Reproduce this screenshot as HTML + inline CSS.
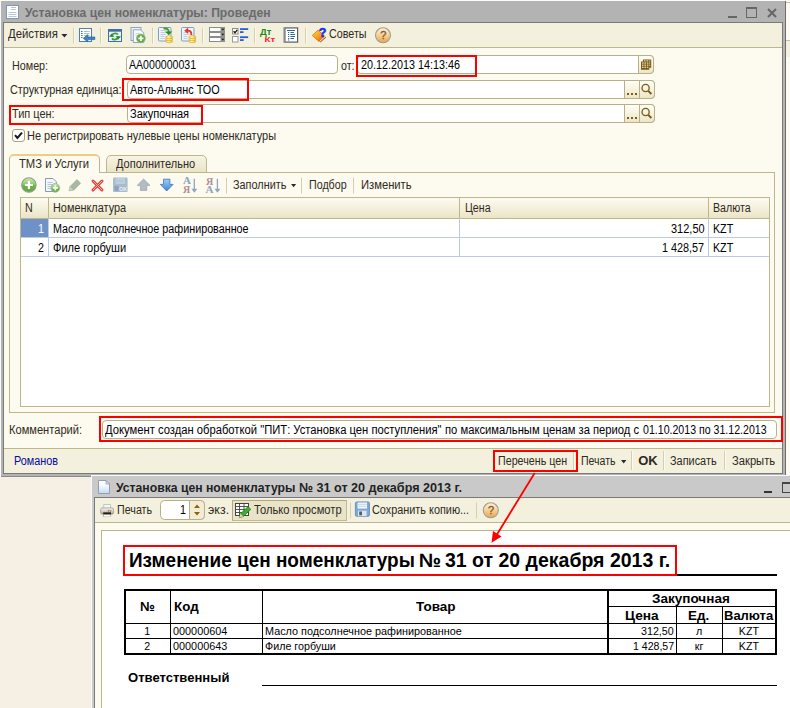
<!DOCTYPE html>
<html>
<head>
<meta charset="utf-8">
<style>
*{box-sizing:border-box;margin:0;padding:0}
html,body{width:790px;height:708px;overflow:hidden;background:#fff}
body{font-family:"Liberation Sans",sans-serif;font-size:11px;color:#2b2b2b;position:relative}
.a{position:absolute}
.t{position:absolute;white-space:nowrap;line-height:1;transform-origin:0 0}
.d{position:absolute;white-space:nowrap;line-height:1;color:#000}
.inp{position:absolute;background:#fff;border:1px solid #b9b08a;border-radius:4px;height:19px}
.ib{position:absolute;background:linear-gradient(#fffef6,#ece6c8);border:1px solid #b9b08a;height:19px}
.sep{position:absolute;width:1px;background:#d6cfae;box-shadow:1px 0 0 #fcfaee}
.red{position:absolute;border:2px solid #fc0000}
svg{position:absolute;overflow:visible}
</style>
</head>
<body>
<!-- backdrop -->
<div class="a" style="left:0;top:0;width:790px;height:708px;background:#f6f0e4"></div>
<div class="a" style="left:786px;top:0;width:4px;height:476px;background:#fdfaef"></div>
<div class="a" style="left:786px;top:2px;width:4px;height:1px;background:#c9bf94"></div>
<div class="a" style="left:786px;top:41px;width:4px;height:16px;background:#f3f1de"></div>
<div class="a" style="left:786px;top:40px;width:4px;height:1px;background:#c9bf94"></div>
<div class="a" style="left:0;top:0;width:790px;height:1px;background:#fafafa"></div>
<div class="a" style="left:0;top:0;width:1px;height:477px;background:#fafafa"></div>

<!-- WINDOW 1 frame -->
<div class="a" style="left:1px;top:1px;width:785px;height:476px;background:#b3b3b3;border-right:1px solid #6e6e6e;border-bottom:1px solid #8a8a8a"></div>
<div class="a" style="left:3px;top:22px;width:780px;height:452px;background:#7a7a7a"></div>
<div class="a" style="left:4px;top:23px;width:778px;height:450px;background:#fdfaef"></div>
<!-- toolbar 1 -->
<div class="a" style="left:4px;top:23px;width:778px;height:25px;background:#f3f1de;border-bottom:1px solid #bfb78c"></div>
<!-- bottom bar -->
<div class="a" style="left:4px;top:448px;width:778px;height:25px;background:#f3f1de;border-top:1px solid #bfb78c"></div>

<!-- title icon 1 -->
<svg style="left:6px;top:5px" width="13" height="14" viewBox="0 0 13 14"><rect x="0.5" y="0.5" width="12" height="13" fill="#fff" stroke="#7f97b3"/><path d="M5 2.5h5M5 4.5h5M2.5 7.5h8M2.5 9.5h8M2.5 11.5h8" stroke="#b7c6d8" stroke-width="1"/></svg>
<!-- window 1 controls -->
<div class="a" style="left:728px;top:16px;width:9px;height:2px;background:#666"></div>
<div class="a" style="left:746px;top:7px;width:11px;height:11px;border:1px solid #666;border-top-width:2px"></div>
<svg style="left:767px;top:8px" width="10" height="10" viewBox="0 0 10 10"><path d="M1 1L9 9M9 1L1 9" stroke="#666" stroke-width="2"/></svg>

<!--ICONS1S-->
<!-- toolbar1 icons -->
<svg style="left:0;top:0" width="400" height="50" viewBox="0 0 400 50">
<path d="M61.4 34h6l-3 3.4z" fill="#2b2b2b"/>
<g stroke="#d6cfae"><path d="M73.5 27.5v16M100.5 27.5v16M152.5 27.5v16M202.5 27.5v16M254.5 27.5v16M305.5 27.5v16"/></g>
<g stroke="#fcfaee"><path d="M74.5 27.5v16M101.5 27.5v16M153.5 27.5v16M203.5 27.5v16M255.5 27.5v16M306.5 27.5v16"/></g>
<defs><linearGradient id="cg" x1="0" y1="0" x2="1" y2="0"><stop offset="0" stop-color="#f6cf44"/><stop offset=".4" stop-color="#fff3a8"/><stop offset="1" stop-color="#f2c434"/></linearGradient></defs>
<!-- icon1 -->
<g transform="translate(79,28)">
<rect x="0.5" y="0.5" width="12" height="13" fill="#fdfeff" stroke="#4f7eab"/>
<path d="M2 3.5h1.6M2 5.5h1.6M2 7.5h1.6M2 9.5h1.6" stroke="#3a78c0"/>
<path d="M5 3.5h5.5M5 5.5h5.5M5 7.5h5.5" stroke="#b3bcc6"/>
<path d="M4.3 10.3L8.8 6.7V9H15.8V11.6H8.8V13.9z" fill="#3b83c6" stroke="#2c6096" stroke-width=".7"/>
</g>
<!-- icon2 -->
<g transform="translate(108,29)">
<rect x="0.5" y="0.5" width="13" height="12" fill="#e9f0f7" stroke="#3f6fa3"/>
<rect x="0.5" y="0.5" width="13" height="2.2" fill="#3f6fa3"/>
<path d="M3.6 7.6C3.8 4.2 8.4 3.4 10 5.6" stroke="#3e9b2c" stroke-width="1.7" fill="none"/>
<path d="M10.4 7.4C10.2 10.8 5.6 11.4 4 9.4" stroke="#3e9b2c" stroke-width="1.7" fill="none"/>
<path d="M1 7.8h5.4l-2.7-3.4z" fill="#2f8a22"/>
<path d="M7.6 7.2h5.4l-2.7 3.4z" fill="#2f8a22"/>
</g>
<!-- icon3 -->
<g transform="translate(130.5,27)">
<rect x="0.5" y="0.5" width="10" height="13" fill="#eef3f8" stroke="#8aa4bf"/>
<path d="M2.8 2.8h7.2l3.3 3.3v9.4h-10.5z" fill="#f8fafd" stroke="#8aa4bf"/>
<path d="M5 6.5h4M5 8.5h3" stroke="#c3cfdc"/>
<circle cx="10.4" cy="11.4" r="4.4" fill="#58ad3c" stroke="#9fb59a" stroke-width=".8"/>
<path d="M10.4 8.8v5.2M7.8 11.4h5.2" stroke="#fff" stroke-width="1.7"/>
</g>
<!-- icon4 -->
<g transform="translate(158,27)">
<rect x="0.5" y="0.5" width="12.5" height="13.5" rx="1" fill="#f0f5fa" stroke="#7d9fc4"/>
<path d="M2.5 3.5h6M2.5 5.5h6M2.5 7.5h5M2.5 9.5h4M2.5 11.5h4" stroke="#bccde0"/>
<path d="M5.5 1.6C9.5 1 10.8 2.6 10.7 5" stroke="#3e9b2c" stroke-width="1.9" fill="none"/>
<path d="M7.1 4.6h7.2l-3.6 3.6z" fill="#2f8a22"/>
<g fill="url(#cg)" stroke="#d2a428" stroke-width=".6"><ellipse cx="11.1" cy="14.2" rx="3.6" ry="1.5"/><ellipse cx="11.1" cy="12.2" rx="3.6" ry="1.5"/><ellipse cx="11.1" cy="10.2" rx="3.6" ry="1.5"/></g>
</g>
<!-- icon5 -->
<g transform="translate(181,27)">
<rect x="0.5" y="0.5" width="12.5" height="13.5" rx="1" fill="#f0f5fa" stroke="#7d9fc4"/>
<path d="M2.5 5.5h5M2.5 7.5h5M2.5 9.5h4M2.5 11.5h4" stroke="#bccde0"/>
<path d="M10.3 8.2C10.8 4.6 9 3.4 6 3.6" stroke="#e23a2e" stroke-width="1.9" fill="none"/>
<path d="M7.2 0.6v6.4l-4-3.2z" fill="#e23a2e"/>
<g fill="url(#cg)" stroke="#d2a428" stroke-width=".6"><ellipse cx="11.3" cy="14.2" rx="3.6" ry="1.5"/><ellipse cx="11.3" cy="12.2" rx="3.6" ry="1.5"/><ellipse cx="11.3" cy="10.2" rx="3.6" ry="1.5"/></g>
</g>
<!-- icon6 -->
<g transform="translate(209,27)" stroke="#8c8c8c" fill="#fff">
<rect x="0.5" y="0.5" width="15" height="4"/><rect x="0.5" y="5.5" width="15" height="4"/><rect x="0.5" y="10.5" width="15" height="4"/>
<g fill="#909090" stroke="none"><rect x="11.5" y="0" width="4.5" height="5"/><rect x="11.5" y="5" width="4.5" height="5"/><rect x="11.5" y="10" width="4.5" height="5"/></g>
<g fill="#1a1a1a" stroke="none"><path d="M12.3 1.8h3l-1.5 1.8zM12.3 6.8h3l-1.5 1.8zM12.3 11.8h3l-1.5 1.8z"/></g>
</g>
<!-- icon7 -->
<g transform="translate(232,28)">
<rect x="0.5" y="0.5" width="5.5" height="5.5" fill="#fff" stroke="#8c8c8c"/>
<rect x="0.5" y="8.5" width="5.5" height="5.5" fill="#fff" stroke="#9a9a9a"/>
<path d="M1.6 3.2l1.4 1.6l2.2-3" stroke="#111" stroke-width="1.3" fill="none"/>
<g fill="#2a5cd8"><rect x="8" y="0.2" width="8.2" height="1.8"/><rect x="8" y="3.2" width="3.5" height="1.8"/><rect x="8" y="8.3" width="8.2" height="1.8"/><rect x="8" y="11.2" width="3.7" height="1.8"/></g>
</g>
<!-- icon8 -->
<text x="260" y="34.8" font-family="Liberation Sans" font-weight="bold" font-size="9.2" fill="#1c8a14" textLength="11.4" lengthAdjust="spacingAndGlyphs">Дт</text>
<text x="264.6" y="41.8" font-family="Liberation Sans" font-weight="bold" font-size="8" fill="#f02626" textLength="10.6" lengthAdjust="spacingAndGlyphs">Кт</text>
<!-- icon9 -->
<g transform="translate(283,27)">
<rect x="0" y="0" width="15.5" height="16" fill="#b9b9b9"/>
<rect x="2" y="1" width="12.5" height="14" fill="#fff" stroke="#5a5a5a"/>
<path d="M4 3.5h8M5 5.5h1.2M7.4 5.5h3.6M5 7.5h1.2M7.4 7.5h4.6M5 9.5h1.2M7.4 9.5h4.6M5 11.5h1.2M7.4 11.5h3.6M5 13h1.2" stroke="#2a6a9c" stroke-width="1"/>
</g>
<!-- icon10 -->
<defs><linearGradient id="tg" x1="0" y1="0" x2="1" y2="1"><stop offset="0" stop-color="#ffe23a"/><stop offset=".55" stop-color="#f79a14"/><stop offset="1" stop-color="#e8500c"/></linearGradient>
<linearGradient id="hg" x1="0" y1="0" x2="0" y2="1"><stop offset="0" stop-color="#fdf2da"/><stop offset=".5" stop-color="#f5d096"/><stop offset="1" stop-color="#e8a452"/></linearGradient></defs>
<g>
<path d="M312.3 35.4l5.8-5.4l8 7.6l-5.6 5z" fill="#b4560e"/>
<path d="M312.3 35.4l5.8-5.4l6.6 6.2l-5.8 5.4z" fill="url(#tg)" stroke="#c4600c" stroke-width=".5"/>
<path d="M319.6 41.6l5.4-5" stroke="#fff" stroke-width="1"/>
<text x="318.8" y="36.6" font-family="Liberation Sans" font-weight="bold" font-size="12.5" fill="#1030f0" stroke="#1030f0" stroke-width=".5">?</text>
</g>
<!-- help -->
<g>
<circle cx="383" cy="35.3" r="7.5" fill="url(#hg)" stroke="#a29c92" stroke-width="1.1"/>
<text x="380.2" y="39.4" font-family="Liberation Sans" font-size="11" fill="#875628" stroke="#875628" stroke-width=".3">?</text>
</g>
</svg>
<!--ICONS1E-->

<!-- form inputs -->
<div class="inp" style="left:126px;top:55px;width:212px"></div>
<div class="inp" style="left:357px;top:55px;width:297px"></div>
<div class="ib" style="left:638px;top:55px;width:16px;border-radius:0 4px 4px 0"></div>
<div class="inp" style="left:127px;top:80px;width:528px"></div>
<div class="ib" style="left:624px;top:80px;width:16px"></div>
<div class="ib" style="left:639px;top:80px;width:16px;border-radius:0 4px 4px 0"></div>
<div class="inp" style="left:127px;top:104px;width:528px"></div>
<div class="ib" style="left:624px;top:104px;width:16px"></div>
<div class="ib" style="left:639px;top:104px;width:16px;border-radius:0 4px 4px 0"></div>
<!--FORMICONS-->

<!-- checkbox -->
<div class="a" style="left:12px;top:129px;width:13px;height:13px;background:#fff;border:1px solid #a9a27c;border-radius:3px"></div>
<svg style="left:12px;top:129px" width="13" height="13" viewBox="0 0 13 13"><path d="M3 6.2L5.4 9L10 3.6" stroke="#1a1a1a" stroke-width="2" fill="none"/></svg>

<!-- tabs -->
<div class="a" style="left:106px;top:155px;width:101px;height:18px;background:linear-gradient(#f7f4e3,#eae4c8);border:1px solid #bfb78c;border-radius:5px 5px 0 0"></div>
<div class="a" style="left:9px;top:172px;width:766px;height:241px;border:1px solid #bfb78c;background:#fdfaef"></div>
<div class="a" style="left:9px;top:154px;width:91px;height:19px;background:#fdfaef;border:1px solid #bfb78c;border-bottom:none;border-radius:5px 5px 0 0;border-top:2px solid #f0cd84"></div>

<!--ICONS2S-->
<!-- inner toolbar icons -->
<svg style="left:0;top:170px" width="420" height="30" viewBox="0 170 420 30">
<defs>
<linearGradient id="gg" x1="0" y1="0" x2="0" y2="1"><stop offset="0" stop-color="#cdeab4"/><stop offset=".45" stop-color="#8acb68"/><stop offset=".55" stop-color="#68b548"/><stop offset="1" stop-color="#5cab3e"/></linearGradient>
<linearGradient id="bg" x1="0" y1="0" x2="0" y2="1"><stop offset="0" stop-color="#9fd0f8"/><stop offset="1" stop-color="#3c86d6"/></linearGradient>
</defs>
<!-- green plus -->
<circle cx="28.9" cy="185" r="7.2" fill="url(#gg)" stroke="#8f9a88" stroke-width="1.1"/>
<path d="M28.9 181v8M24.9 185h8" stroke="#fff" stroke-width="2.2"/>
<!-- copy -->
<g transform="translate(45,178)">
<path d="M0.5 0.5h7.5l3.3 3.3v9.7h-10.8z" fill="#f4f8fc" stroke="#7e9cbc"/>
<path d="M2.5 4.5h5M2.5 6.5h6M2.5 8.5h4M2.5 10.5h3" stroke="#b5c6d9"/>
<circle cx="10.3" cy="9.8" r="4.4" fill="url(#gg)" stroke="#9fb59a" stroke-width=".8"/>
<path d="M10.3 7.2v5.2M7.7 9.8h5.2" stroke="#fff" stroke-width="1.7"/>
</g>
<!-- pencil -->
<path d="M69 190.8l1-4.2l7-7l3.6 3.6l-7 7z" fill="#a9b8a2" stroke="#96a690" stroke-width=".6"/>
<path d="M69 190.8l1-4.2l3.4 3.4z" fill="#c9d2c4"/>
<!-- red X -->
<path d="M93 181l9 9M102 181l-9 9" stroke="#d9473f" stroke-width="3" stroke-linecap="round"/>
<path d="M93.2 181.2l8.6 8.6M101.8 181.2l-8.6 8.6" stroke="#f1a6a0" stroke-width="1" stroke-linecap="round"/>
<!-- disk grey -->
<g transform="translate(113,177.5)">
<rect x="0" y="0" width="14.6" height="14.6" rx="1.2" fill="#a9bccf"/>
<rect x="2.6" y="0.8" width="9.4" height="5.4" fill="#c9d6e3"/>
<path d="M3 2.5h8.6M3 4.3h8.6" stroke="#a9bccf" stroke-width=".8"/>
<rect x="1.6" y="8.4" width="4" height="5" fill="#8da3ba"/>
<text x="6" y="13.8" font-family="Liberation Sans" font-weight="bold" font-size="6.2" fill="#e4ebf2" textLength="8.4" lengthAdjust="spacingAndGlyphs">OK</text>
</g>
<!-- up arrow grey -->
<path d="M143.6 179l6.4 6.4h-3.2v5h-6.4v-5h-3.2z" fill="#b3bcc4" stroke="#9ea8b1" stroke-width=".8" stroke-linejoin="round"/>
<!-- down arrow blue -->
<path d="M166.7 191l6.4-6.6h-3.2v-5.2h-6.4v5.2h-3.2z" fill="url(#bg)" stroke="#3a74b8" stroke-width=".8" stroke-linejoin="round"/>
<!-- sort AЯ -->
<g font-family="Liberation Serif" font-size="10.4" font-weight="bold">
<text x="183" y="184.4" fill="#8aa4bc" textLength="8" lengthAdjust="spacingAndGlyphs">А</text>
<text x="183" y="192.9" font-size="9.6" fill="#b08c94" textLength="7.2" lengthAdjust="spacingAndGlyphs">Я</text>
<text x="206" y="184.8" font-size="9.6" fill="#b08c94" textLength="7.2" lengthAdjust="spacingAndGlyphs">Я</text>
<text x="205.6" y="192.9" fill="#8aa4bc" textLength="8" lengthAdjust="spacingAndGlyphs">А</text>
</g>
<g stroke="#8fa6bd" stroke-width="1.3" fill="#8fa6bd"><path d="M194.3 178.8v10.6"/><path d="M191.4 188.8h5.9l-2.95 4z" stroke="none"/><path d="M217.4 178.8v10.6"/><path d="M214.5 188.8h5.9l-2.95 4z" stroke="none"/></g>
<!-- seps -->
<g stroke="#d6cfae"><path d="M226.5 177.5v16M301.5 177.5v16M353.5 177.5v16"/></g>
<path d="M291 184h5.2l-2.6 3.2z" fill="#2b2b2b"/>
</svg>
<!--ICONS2E-->

<!-- table 1 -->
<div class="a" style="left:20px;top:197px;width:750px;height:210px;border:1px solid #bfb78c;background:#fff"></div>
<div class="a" style="left:21px;top:198px;width:748px;height:21px;background:linear-gradient(#fdfbf1,#ebe5c6);border-bottom:1px solid #bfb78c"></div>
<div class="a" style="left:48px;top:198px;width:1px;height:20px;background:#bfb78c"></div>
<div class="a" style="left:459px;top:198px;width:1px;height:20px;background:#bfb78c"></div>
<div class="a" style="left:708px;top:198px;width:1px;height:20px;background:#bfb78c"></div>
<div class="a" style="left:21px;top:219px;width:27px;height:18px;background:#6e92c8"></div>
<div class="a" style="left:21px;top:237px;width:748px;height:1px;background:#bccbe3"></div>
<div class="a" style="left:21px;top:256px;width:748px;height:1px;background:#bccbe3"></div>
<div class="a" style="left:48px;top:218px;width:1px;height:39px;background:#bccbe3"></div>
<div class="a" style="left:459px;top:218px;width:1px;height:39px;background:#bccbe3"></div>
<div class="a" style="left:708px;top:218px;width:1px;height:39px;background:#bccbe3"></div>

<!-- comment -->
<div class="inp" style="left:102px;top:420px;width:675px;height:19px"></div>

<!-- bottom seps -->
<div class="sep" style="left:573px;top:451px;height:19px"></div>
<div class="sep" style="left:631px;top:451px;height:19px"></div>
<div class="sep" style="left:663px;top:451px;height:19px"></div>
<div class="sep" style="left:724px;top:451px;height:19px"></div>
<svg style="left:621px;top:459.6px" width="6" height="4" viewBox="0 0 6 4"><path d="M0 0h5.4L2.7 3.4z" fill="#2b2b2b"/></svg>

<!-- WINDOW 2 -->
<div class="a" style="left:91px;top:475px;width:699px;height:233px;background:#fafafa"></div>
<div class="a" style="left:92px;top:476px;width:698px;height:232px;background:#c9c9c9"></div>
<div class="a" style="left:94px;top:497px;width:696px;height:211px;background:#7a7a7a"></div>
<div class="a" style="left:95px;top:498px;width:695px;height:210px;background:#fdfaef"></div>
<div class="a" style="left:95px;top:498px;width:695px;height:25px;background:#f3f1de;border-bottom:1px solid #bfb78c"></div>
<div class="a" style="left:101px;top:530px;width:689px;height:178px;background:#fff;border-top:1px solid #bfb78c;border-left:1px solid #bfb78c"></div>
<!-- win2 controls -->
<div class="a" style="left:764px;top:491px;width:8px;height:2px;background:#333"></div>
<div class="a" style="left:782px;top:482px;width:11px;height:11px;border:1px solid #444;border-top-width:2px"></div>
<!-- title icon 2 -->
<svg style="left:98px;top:480px" width="12" height="14" viewBox="0 0 12 14"><defs><linearGradient id="dg2" x1="0" y1="0" x2="0" y2="1"><stop offset="0" stop-color="#ffffff"/><stop offset=".4" stop-color="#f6f9fc"/><stop offset="1" stop-color="#c3d8ec"/></linearGradient></defs><path d="M0.5 0.5h7.5l3.5 3.5v9.5h-11z" fill="url(#dg2)" stroke="#8ba1b6"/><path d="M8 0.5v3.5h3.5z" fill="#dbe6f2" stroke="#8ba1b6" stroke-width=".8"/></svg>

<!--ICONS3S-->
<!-- toolbar 2 + form icons -->
<svg style="left:0;top:0" width="790" height="708" viewBox="0 0 790 708">
<!-- calendar -->
<path d="M643 59.4h8.2v8.4h-2v2h-8.2v-8.4h2z" fill="#7a5a14"/>
<g fill="#f3ecc9"><rect x="642" y="62.5" width="1.6" height="1.1"/><rect x="644.4" y="62.5" width="1.6" height="1.1"/><rect x="646.8" y="62.5" width="1.6" height="1.1"/>
<rect x="642" y="64.6" width="1.6" height="1.1"/><rect x="644.4" y="64.6" width="1.6" height="1.1"/><rect x="646.8" y="64.6" width="1.6" height="1.1"/>
<rect x="642" y="66.7" width="1.6" height="1.1"/><rect x="644.4" y="66.7" width="1.6" height="1.1"/><rect x="646.8" y="66.7" width="1.6" height="1.1"/>
<rect x="644" y="60.4" width="1.6" height="1"/><rect x="646.4" y="60.4" width="1.6" height="1"/><rect x="648.8" y="60.4" width="1.4" height="1"/>
<rect x="649.2" y="62.5" width="1" height="1.1"/><rect x="649.2" y="64.6" width="1" height="1.1"/></g>
<!-- dots -->
<g fill="#7a5a14"><rect x="627" y="93" width="2" height="2"/><rect x="631" y="93" width="2" height="2"/><rect x="635" y="93" width="2" height="2"/>
<rect x="627" y="117" width="2" height="2"/><rect x="631" y="117" width="2" height="2"/><rect x="635" y="117" width="2" height="2"/></g>
<!-- search -->
<g fill="none" stroke="#7a5a14"><circle cx="645.6" cy="88" r="3.6" stroke-width="1.3"/><path d="M648.2 90.8l3.2 3.2" stroke-width="1.9"/>
<circle cx="645.6" cy="112" r="3.6" stroke-width="1.3"/><path d="M648.2 114.8l3.2 3.2" stroke-width="1.9"/></g>
<!-- printer -->
<defs><linearGradient id="pg" x1="0" y1="0" x2="0" y2="1"><stop offset="0" stop-color="#f1eeec"/><stop offset=".5" stop-color="#d9d0cb"/><stop offset="1" stop-color="#a89080"/></linearGradient>
<linearGradient id="dg" x1="0" y1="0" x2="0" y2="1"><stop offset="0" stop-color="#ffffff"/><stop offset=".4" stop-color="#f4f8fc"/><stop offset="1" stop-color="#c5d9ec"/></linearGradient></defs>
<g transform="translate(100,504)">
<rect x="3.8" y="0.6" width="6.6" height="5" fill="#f4f6f8" stroke="#b4bcc4" stroke-width=".8"/>
<rect x="0.6" y="3.9" width="13" height="6.4" rx="1.8" fill="url(#pg)" stroke="#a09088" stroke-width=".7"/>
<rect x="3.2" y="8.4" width="7.8" height="3.2" fill="#1c1c1c"/>
<rect x="3.6" y="10.6" width="7" height="2.2" fill="#fbfbfb" stroke="#b0b0b0" stroke-width=".5"/>
<rect x="7.8" y="6.3" width="1.5" height="1.2" fill="#e63a2a"/><rect x="9.8" y="6.3" width="1.5" height="1.2" fill="#35b035"/>
</g>
<!-- spinner -->
<rect x="160.5" y="500.5" width="44" height="19" rx="4" fill="#fff" stroke="#b9b08a"/>
<path d="M189.5 500.5h11a4 4 0 0 1 4 4v11a4 4 0 0 1-4 4h-11z" fill="#f1ecd2" stroke="#b9b08a"/>
<path d="M194 508h6l-3-3.6zM194 512h6l-3 3.6z" fill="#8a6414"/>
<!-- pressed button -->
<rect x="232.5" y="500.5" width="114" height="20" fill="#e9e4c8" stroke="#c3ba92"/>
<path d="M232.5 520.5v-20h114" fill="none" stroke="#b3a97c"/>
<!-- table+pencil icon -->
<g transform="translate(235,503)">
<rect x="0.5" y="0.5" width="13" height="12" fill="#fff" stroke="#444"/>
<path d="M0.5 3.5h13M0.5 6.5h13M0.5 9.5h13M4.5 0.5v12M9 0.5v12" stroke="#444" stroke-width=".9"/>
<path d="M4.4 14.6l1-3.8l7.6-7.2l2.8 2.8l-7.6 7.2z" fill="#3fae2c" stroke="#1f7a16" stroke-width=".7"/>
<path d="M4.4 14.6l1-3.8l2.8 2.8z" fill="#e8d9a0"/>
</g>
<!-- seps -->
<g stroke="#d6cfae"><path d="M350.5 502.5v16M476.5 502.5v16"/></g>
<!-- disk -->
<g transform="translate(355,501.5)">
<rect x="0.4" y="0.4" width="14" height="14.4" rx="1.4" fill="#7fa9d6" stroke="#5585ba" stroke-width=".8"/>
<rect x="2.6" y="1" width="9.4" height="6" fill="#f6f9fc"/>
<path d="M3 2.8h8.6M3 4.8h8.6" stroke="#bccde0" stroke-width=".9"/>
<rect x="3" y="9.2" width="8.6" height="5.4" fill="#dde5ee"/>
<rect x="4.2" y="10" width="2.8" height="3.8" fill="#4a5f78"/>
</g>
<!-- help2 -->
<circle cx="490.8" cy="510.3" r="7.5" fill="url(#hg)" stroke="#a29c92" stroke-width="1.1"/>
<text x="488" y="514.4" font-family="Liberation Sans" font-size="11" fill="#875628" stroke="#875628" stroke-width=".3">?</text>
</svg>
<!--ICONS3E-->

<!-- doc -->
<div class="a" style="left:677px;top:574px;width:100px;height:2px;background:#000"></div>
<div class="a" style="left:124px;top:589px;width:653px;height:66px;border:2px solid #000"></div>
<div class="a" style="left:170px;top:591px;width:1px;height:62px;background:#000"></div>
<div class="a" style="left:262px;top:591px;width:1px;height:62px;background:#000"></div>
<div class="a" style="left:607px;top:591px;width:2px;height:62px;background:#000"></div>
<div class="a" style="left:676px;top:607px;width:1px;height:46px;background:#000"></div>
<div class="a" style="left:722px;top:607px;width:1px;height:46px;background:#000"></div>
<div class="a" style="left:609px;top:606px;width:166px;height:1px;background:#000"></div>
<div class="a" style="left:126px;top:623px;width:649px;height:1px;background:#000"></div>
<div class="a" style="left:126px;top:638px;width:649px;height:1px;background:#000"></div>
<div class="a" style="left:262px;top:685px;width:515px;height:1px;background:#000"></div>

<span class="t" id="t0" style="left:24.70px;top:6.00px;font-size:13px;font-weight:bold;color:#6a6a6a;transform:scaleX(0.9348);">Установка цен номенклатуры: Проведен</span>
<span class="t" id="t1" style="left:7.70px;top:28.24px;font-size:12px;font-weight:normal;color:#2e2a22;transform:scaleX(0.9472);">Действия</span>
<span class="t" id="t2" style="left:328.70px;top:28.34px;font-size:12px;font-weight:normal;color:#2e2a22;transform:scaleX(0.8956);">Советы</span>
<span class="t" id="t3" style="left:12.20px;top:60.34px;font-size:12px;font-weight:normal;color:#2e2a22;transform:scaleX(0.8962);">Номер:</span>
<span class="t" id="t4" style="left:129.20px;top:59.34px;font-size:12px;font-weight:normal;color:#000;transform:scaleX(0.8820);">АА000000031</span>
<span class="t" id="t5" style="left:340.96px;top:60.34px;font-size:12px;font-weight:normal;color:#2e2a22;transform:scaleX(0.8900);">от:</span>
<span class="t" id="t6" style="left:360.70px;top:59.34px;font-size:12px;font-weight:normal;color:#000;transform:scaleX(0.9000);">20.12.2013 14:13:46</span>
<span class="t" id="t7" style="left:10.20px;top:84.34px;font-size:12px;font-weight:normal;color:#2e2a22;transform:scaleX(0.9020);">Структурная единица:</span>
<span class="t" id="t8" style="left:129.70px;top:84.34px;font-size:12px;font-weight:normal;color:#000;transform:scaleX(0.9021);">Авто-Альянс ТОО</span>
<span class="t" id="t9" style="left:12.20px;top:108.34px;font-size:12px;font-weight:normal;color:#2e2a22;transform:scaleX(0.9118);">Тип цен:</span>
<span class="t" id="t10" style="left:129.70px;top:108.34px;font-size:12px;font-weight:normal;color:#000;transform:scaleX(0.9196);">Закупочная</span>
<span class="t" id="t11" style="left:27.20px;top:130.34px;font-size:12px;font-weight:normal;color:#2e2a22;transform:scaleX(0.9140);">Не регистрировать нулевые цены номенклатуры</span>
<span class="t" id="t12" style="left:19.20px;top:158.34px;font-size:12px;font-weight:normal;color:#2e2a22;transform:scaleX(0.9364);">ТМЗ и Услуги</span>
<span class="t" id="t13" style="left:116.20px;top:158.34px;font-size:12px;font-weight:normal;color:#2e2a22;transform:scaleX(0.9158);">Дополнительно</span>
<span class="t" id="t14" style="left:233.20px;top:179.34px;font-size:12px;font-weight:normal;color:#2e2a22;transform:scaleX(0.9063);">Заполнить</span>
<span class="t" id="t15" style="left:309.20px;top:179.34px;font-size:12px;font-weight:normal;color:#2e2a22;transform:scaleX(0.8896);">Подбор</span>
<span class="t" id="t16" style="left:360.70px;top:179.34px;font-size:12px;font-weight:normal;color:#2e2a22;transform:scaleX(0.9346);">Изменить</span>
<span class="t" id="t17" style="left:24.89px;top:202.34px;font-size:12px;font-weight:normal;color:#2e2a22;transform:scaleX(0.8900);">N</span>
<span class="t" id="t18" style="left:53.20px;top:202.34px;font-size:12px;font-weight:normal;color:#2e2a22;transform:scaleX(0.9077);">Номенклатура</span>
<span class="t" id="t19" style="left:464.70px;top:202.34px;font-size:12px;font-weight:normal;color:#2e2a22;transform:scaleX(0.8871);">Цена</span>
<span class="t" id="t20" style="left:712.70px;top:202.34px;font-size:12px;font-weight:normal;color:#2e2a22;transform:scaleX(0.8857);">Валюта</span>
<span class="t" id="t21" style="left:38.42px;top:223.34px;font-size:12px;font-weight:normal;color:#fff;transform:scaleX(0.8900);">1</span>
<span class="t" id="t22" style="left:53.20px;top:223.34px;font-size:12px;font-weight:normal;color:#000;transform:scaleX(0.8972);">Масло подсолнечное рафинированное</span>
<span class="t" id="t23" style="left:670.70px;top:223.34px;font-size:12px;font-weight:normal;color:#000;transform:scaleX(0.9155);">312,50</span>
<span class="t" id="t24" style="left:713.16px;top:223.34px;font-size:12px;font-weight:normal;color:#000;transform:scaleX(0.8900);">KZT</span>
<span class="t" id="t25" style="left:38.42px;top:242.34px;font-size:12px;font-weight:normal;color:#000;transform:scaleX(0.8900);">2</span>
<span class="t" id="t26" style="left:53.20px;top:242.34px;font-size:12px;font-weight:normal;color:#000;transform:scaleX(0.9224);">Филе горбуши</span>
<span class="t" id="t27" style="left:662.20px;top:242.34px;font-size:12px;font-weight:normal;color:#000;transform:scaleX(0.9011);">1 428,57</span>
<span class="t" id="t28" style="left:713.16px;top:242.34px;font-size:12px;font-weight:normal;color:#000;transform:scaleX(0.8900);">KZT</span>
<span class="t" id="t29" style="left:9.20px;top:423.84px;font-size:12px;font-weight:normal;color:#2e2a22;transform:scaleX(0.9262);">Комментарий:</span>
<span class="t" id="t30" style="left:104.70px;top:423.84px;font-size:12px;font-weight:normal;color:#000;transform:scaleX(0.9353);">Документ создан обработкой &quot;ПИТ: Установка цен поступления&quot;</span>
<span class="t" id="t31" style="left:444.90px;top:423.84px;font-size:12px;font-weight:normal;color:#000;transform:scaleX(0.9348);">по максимальным ценам за период с</span>
<span class="t" id="t32" style="left:642.70px;top:423.84px;font-size:12px;font-weight:normal;color:#000;transform:scaleX(0.8831);">01.10.2013 по 31.12.2013</span>
<span class="t" id="t33" style="left:14.20px;top:455.34px;font-size:12px;font-weight:normal;color:#0808a0;transform:scaleX(0.9046);">Романов</span>
<span class="t" id="t34" style="left:497.70px;top:455.34px;font-size:12px;font-weight:normal;color:#2e2a22;transform:scaleX(0.8923);">Перечень цен</span>
<span class="t" id="t35" style="left:581.20px;top:455.34px;font-size:12px;font-weight:normal;color:#2e2a22;transform:scaleX(0.8801);">Печать</span>
<span class="t" id="t36" style="left:638.25px;top:453.50px;font-size:13px;font-weight:bold;color:#2e2a22;transform:scaleX(1.0000);">OK</span>
<span class="t" id="t37" style="left:670.20px;top:455.34px;font-size:12px;font-weight:normal;color:#2e2a22;transform:scaleX(0.9087);">Записать</span>
<span class="t" id="t38" style="left:732.20px;top:455.34px;font-size:12px;font-weight:normal;color:#2e2a22;transform:scaleX(0.9325);">Закрыть</span>
<span class="t" id="t39" style="left:116.20px;top:481.00px;font-size:13px;font-weight:bold;color:#222;transform:scaleX(0.9383);">Установка цен номенклатуры</span>
<span class="t" id="t40" style="left:299.30px;top:481.00px;font-size:13px;font-weight:bold;color:#222;transform:scaleX(0.9683);">№ 31 от 20 декабря 2013 г.</span>
<span class="t" id="t41" style="left:117.20px;top:504.34px;font-size:12px;font-weight:normal;color:#2e2a22;transform:scaleX(0.8928);">Печать</span>
<span class="t" id="t42" style="left:179.57px;top:504.34px;font-size:12px;font-weight:normal;color:#000;transform:scaleX(0.8900);">1</span>
<span class="t" id="t43" style="left:208.20px;top:504.34px;font-size:12px;font-weight:normal;color:#2e2a22;transform:scaleX(1.0372);">экз.</span>
<span class="t" id="t44" style="left:253.70px;top:504.34px;font-size:12px;font-weight:normal;color:#2e2a22;transform:scaleX(0.9307);">Только просмотр</span>
<span class="t" id="t45" style="left:372.20px;top:504.34px;font-size:12px;font-weight:normal;color:#2e2a22;transform:scaleX(0.9055);">Сохранить копию...</span>
<span class="t" id="t46" style="left:129.40px;top:550.58px;font-size:19.4px;font-weight:bold;color:#000;transform:scaleX(0.9774);">Изменение цен номенклатуры</span>
<span class="t" id="t47" style="left:419.25px;top:550.58px;font-size:19.4px;font-weight:bold;color:#000;transform:scaleX(1.0400);">№</span>
<span class="t" id="t48" style="left:445.40px;top:550.58px;font-size:19.4px;font-weight:bold;color:#000;transform:scaleX(1.0055);">31 от 20 декабря 2013 г.</span>
<span class="t" id="t49" style="left:139.92px;top:599.72px;font-size:13.33px;font-weight:bold;color:#000;transform:scaleX(1.0000);">№</span>
<span class="t" id="t50" style="left:174.07px;top:599.72px;font-size:13.33px;font-weight:bold;color:#000;transform:scaleX(1.0000);">Код</span>
<span class="t" id="t51" style="left:415.70px;top:599.72px;font-size:13.33px;font-weight:bold;color:#000;transform:scaleX(1.0150);">Товар</span>
<span class="t" id="t52" style="left:651.70px;top:591.72px;font-size:13.33px;font-weight:bold;color:#000;transform:scaleX(1.0145);">Закупочная</span>
<span class="t" id="t53" style="left:625.10px;top:608.52px;font-size:13.33px;font-weight:bold;color:#000;transform:scaleX(1.0250);">Цена</span>
<span class="t" id="t54" style="left:688.07px;top:608.52px;font-size:13.33px;font-weight:bold;color:#000;transform:scaleX(1.0000);">Ед.</span>
<span class="t" id="t55" style="left:723.90px;top:608.52px;font-size:13.33px;font-weight:bold;color:#000;transform:scaleX(0.9743);">Валюта</span>
<span class="t" id="t56" style="left:144.18px;top:625.97px;font-size:10.67px;font-weight:normal;color:#000;transform:scaleX(1.0000);">1</span>
<span class="t" id="t57" style="left:173.00px;top:625.97px;font-size:10.67px;font-weight:normal;color:#000;transform:scaleX(1.0179);">000000604</span>
<span class="t" id="t58" style="left:265.30px;top:625.97px;font-size:10.67px;font-weight:normal;color:#000;transform:scaleX(1.0161);">Масло подсолнечное рафинированное</span>
<span class="t" id="t59" style="left:641.10px;top:625.97px;font-size:10.67px;font-weight:normal;color:#000;transform:scaleX(1.0033);">312,50</span>
<span class="t" id="t60" style="left:695.89px;top:625.97px;font-size:10.67px;font-weight:normal;color:#000;transform:scaleX(1.0000);">л</span>
<span class="t" id="t61" style="left:738.83px;top:625.97px;font-size:10.67px;font-weight:normal;color:#000;transform:scaleX(1.0000);">KZT</span>
<span class="t" id="t62" style="left:144.13px;top:640.97px;font-size:10.67px;font-weight:normal;color:#000;transform:scaleX(1.0000);">2</span>
<span class="t" id="t63" style="left:173.00px;top:640.97px;font-size:10.67px;font-weight:normal;color:#000;transform:scaleX(1.0179);">000000643</span>
<span class="t" id="t64" style="left:265.30px;top:640.97px;font-size:10.67px;font-weight:normal;color:#000;transform:scaleX(1.0060);">Филе горбуши</span>
<span class="t" id="t65" style="left:632.70px;top:640.97px;font-size:10.67px;font-weight:normal;color:#000;transform:scaleX(0.9907);">1 428,57</span>
<span class="t" id="t66" style="left:694.72px;top:640.97px;font-size:10.67px;font-weight:normal;color:#000;transform:scaleX(1.0000);">кг</span>
<span class="t" id="t67" style="left:738.83px;top:640.97px;font-size:10.67px;font-weight:normal;color:#000;transform:scaleX(1.0000);">KZT</span>
<span class="t" id="t68" style="left:127.90px;top:670.72px;font-size:13.33px;font-weight:bold;color:#000;transform:scaleX(0.9793);">Ответственный</span>

<!-- red annotations -->
<div class="red" style="left:356px;top:55px;width:121px;height:22px"></div>
<div class="red" style="left:122px;top:78px;width:127px;height:23px"></div>
<div class="red" style="left:9px;top:105px;width:194px;height:20px"></div>
<div class="red" style="left:99px;top:416px;width:684px;height:26px"></div>
<div class="red" style="left:493px;top:450px;width:85px;height:22px"></div>
<div class="red" style="left:123px;top:545px;width:554px;height:31px"></div>
<svg style="left:0;top:0" width="790" height="708" viewBox="0 0 790 708"><path d="M534.7 473L496 536" stroke="#fc0000" stroke-width="1.8" fill="none"/><path d="M491.5 542.8L493 531L501.6 536.4z" fill="#fc0000"/></svg>
</body>
</html>
